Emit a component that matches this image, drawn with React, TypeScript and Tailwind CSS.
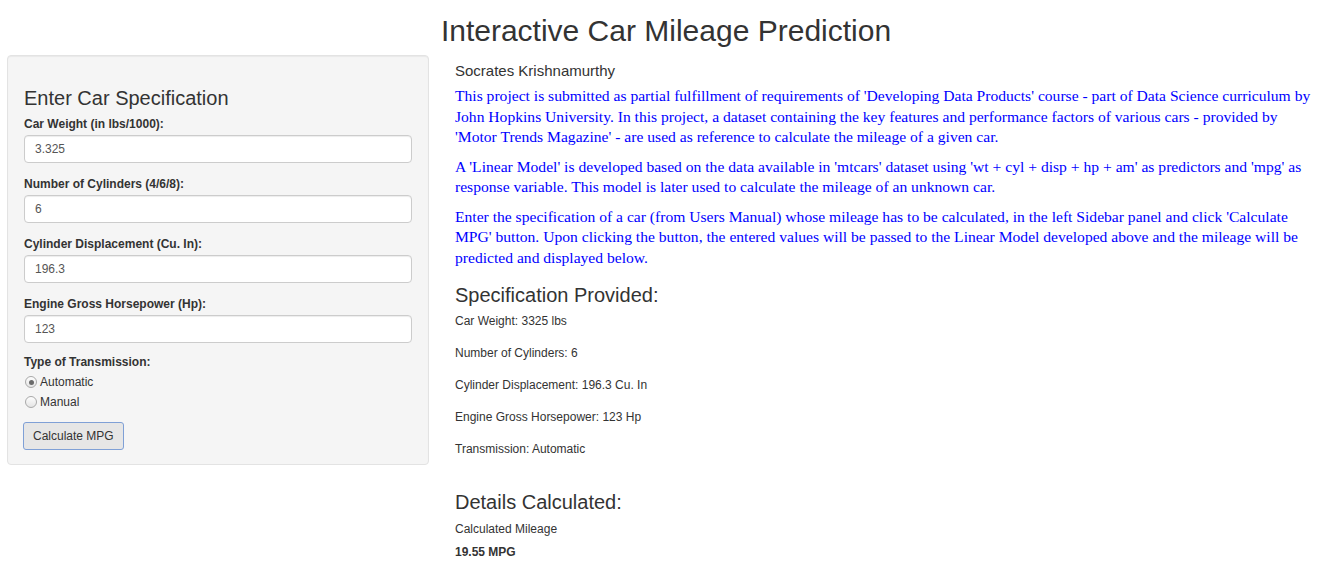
const fields = [
  { label: 'Car Weight (in lbs/1000):', value: '3.325' },
  { label: 'Number of Cylinders (4/6/8):', value: '6' },
  { label: 'Cylinder Displacement (Cu. In):', value: '196.3' },
  { label: 'Engine Gross Horsepower (Hp):', value: '123' },
]

const specs = [
  'Car Weight: 3325 lbs',
  'Number of Cylinders: 6',
  'Cylinder Displacement: 196.3 Cu. In',
  'Engine Gross Horsepower: 123 Hp',
  'Transmission: Automatic',
]

function Radio({ label, checked }: { label: string; checked?: boolean }) {
  return (
    <div className="flex h-[20px] items-center">
      <span className="ml-[1px] flex h-[12px] w-[12px] items-center justify-center rounded-full border border-[#a9a9a9] bg-[linear-gradient(#fdfdfd,#e4e4e4)]">
        {checked && <span className="h-[5px] w-[5px] rounded-full bg-[#6a6a6a]" />}
      </span>
      <span className="ml-[3px] text-[12px] text-[#333]">{label}</span>
    </div>
  )
}

export default function App() {
  return (
    <div className="h-[564px] w-[1320px] overflow-hidden bg-white font-['Liberation_Sans',Arial,sans-serif] text-[#333]">
      <h1 className="pl-[12px] pt-[14px] text-center text-[30px] font-normal leading-[33px]">
        Interactive Car Mileage Prediction
      </h1>

      <div className="mt-[8px] flex pl-[7px] pr-[3px]">
        <div className="w-[422px] shrink-0 self-start rounded-[4px] border border-[#e3e3e3] bg-[#f5f5f5] px-[16px] pb-[14px] pt-[31px] shadow-[inset_0_1px_1px_rgba(0,0,0,0.05)]">
          <h3 className="text-[20px] font-normal leading-[22px]">Enter Car Specification</h3>
          <div className="mt-[7px]">
            {fields.map((f) => (
              <div key={f.label} className="mb-[13px]">
                <label className="mb-[3px] block text-[12px] font-bold leading-[16px]">{f.label}</label>
                <div className="flex h-[28px] items-center rounded-[4px] border border-[#ccc] bg-white pl-[10px] text-[12px] text-[#555] shadow-[inset_0_1px_1px_rgba(0,0,0,0.075)]">
                  {f.value}
                </div>
              </div>
            ))}
          </div>
          <label className="-mt-[2px] block text-[12px] font-bold leading-[16px]">Type of Transmission:</label>
          <div className="mt-[2px]">
            <Radio label="Automatic" checked />
            <Radio label="Manual" />
          </div>
          <button className="-ml-[1px] mt-[10px] h-[28px] rounded-[3px] border border-[#7fa0d6] bg-[#e6e6e6] px-[9px] text-[12px] text-[#333]">
            Calculate MPG
          </button>
        </div>

        <div className="ml-[26px] flex-1">
          <div className="mt-[6px] text-[15px] leading-[20px]">Socrates Krishnamurthy</div>
          <div className="mt-[5px] font-['Liberation_Serif','Times_New_Roman',serif] text-[15.6px] leading-[20.5px] text-[#0000ff]">
            <p className="mb-[9px]">
              This project is submitted as partial fulfillment of requirements of 'Developing Data Products' course - part of Data Science curriculum by John Hopkins University. In this project, a dataset containing the key features and performance factors of various cars - provided by 'Motor Trends Magazine' - are used as reference to calculate the mileage of a given car.
            </p>
            <p className="mb-[9px]">
              A 'Linear Model' is developed based on the data available in 'mtcars' dataset using 'wt + cyl + disp + hp + am' as predictors and 'mpg' as response variable. This model is later used to calculate the mileage of an unknown car.
            </p>
            <p>
              Enter the specification of a car (from Users Manual) whose mileage has to be calculated, in the left Sidebar panel and click 'Calculate MPG' button. Upon clicking the button, the entered values will be passed to the Linear Model developed above and the mileage will be predicted and displayed below.
            </p>
          </div>

          <h3 className="mt-[16px] text-[20px] font-normal leading-[22px]">Specification Provided:</h3>
          <div className="mt-[7px] text-[12px] leading-[17px]">
            {specs.map((s) => (
              <p key={s} className="mb-[15px]">{s}</p>
            ))}
          </div>

          <h3 className="mt-[33px] text-[20px] font-normal leading-[22px]">Details Calculated:</h3>
          <div className="mt-[8px] text-[12px] leading-[17px]">Calculated Mileage</div>
          <div className="mt-[6px] text-[12px] font-bold leading-[17px]">19.55 MPG</div>
        </div>
      </div>
    </div>
  )
}
